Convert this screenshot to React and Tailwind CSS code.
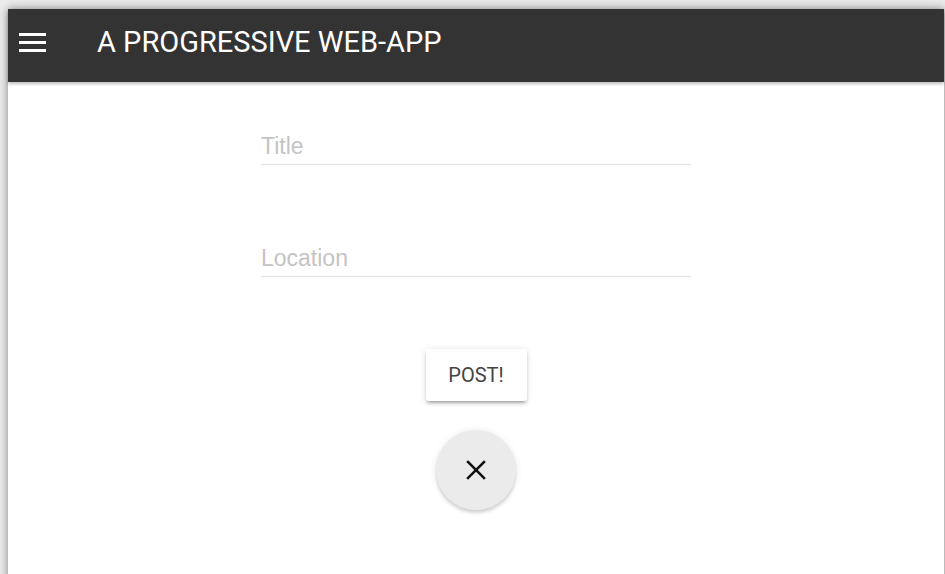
import React from 'react';

const MenuIcon = () => (
    <svg width="27" height="19" viewBox="0 0 27 19" fill="#ffffff">
        <rect x="0" y="0" width="27" height="3" />
        <rect x="0" y="8" width="27" height="3" />
        <rect x="0" y="16" width="27" height="3" />
    </svg>
);

const CloseIcon = () => (
    <svg width="20" height="20" viewBox="0 0 20 20" stroke="#111111" strokeWidth="2.5" strokeLinecap="square">
        <line x1="2" y1="2" x2="18" y2="18" />
        <line x1="18" y1="2" x2="2" y2="18" />
    </svg>
);

const TextField = ({ label }) => (
    <input
        type="text"
        placeholder={label}
        className="block w-[430px] h-[36px] p-0 bg-transparent border-0 border-b border-[#e0e0e0] outline-none text-[23px] text-[#212121] placeholder:text-[#c4c4c4] font-['Liberation_Sans',Arial,sans-serif]"
    />
);

const App = () => {
    return (
        <div className="w-[945px] h-[574px] overflow-hidden bg-[#ececec] pl-[8px] pt-[9px]">
            <div className="w-[936px] h-[600px] bg-white shadow-[0_0_9px_rgba(0,0,0,0.45)] flex flex-col">
                {/* Header */}
                <header className="h-[73px] shrink-0 bg-[#333333] flex items-center pb-[6px] shadow-[0_2px_3px_rgba(0,0,0,0.25)] relative z-10">
                    <div className="w-[89px] pl-[11px] flex items-center">
                        <MenuIcon />
                    </div>
                    <h1 className="text-white text-[29px] font-normal font-['Roboto',Arial,sans-serif] leading-none">
                        A PROGRESSIVE WEB-APP
                    </h1>
                </header>

                {/* Post form */}
                <main className="flex flex-col items-center pt-[47px]">
                    <TextField label="Title" />
                    <div className="h-[76px]" />
                    <TextField label="Location" />
                    <button className="mt-[72px] w-[101px] h-[52px] bg-white rounded-[3px] text-[20px] text-[#444444] font-['Roboto',Arial,sans-serif] shadow-[0_3px_3px_rgba(0,0,0,0.14),0_4px_2px_-3px_rgba(0,0,0,0.2),0_1px_7px_rgba(0,0,0,0.12)]">
                        POST!
                    </button>
                    <button className="mt-[29px] w-[80px] h-[80px] rounded-full bg-[#ebebeb] flex items-center justify-center shadow-[0_3px_3px_rgba(0,0,0,0.12),0_1px_7px_rgba(0,0,0,0.1)]">
                        <CloseIcon />
                    </button>
                </main>
            </div>
        </div>
    );
};

export default App;
